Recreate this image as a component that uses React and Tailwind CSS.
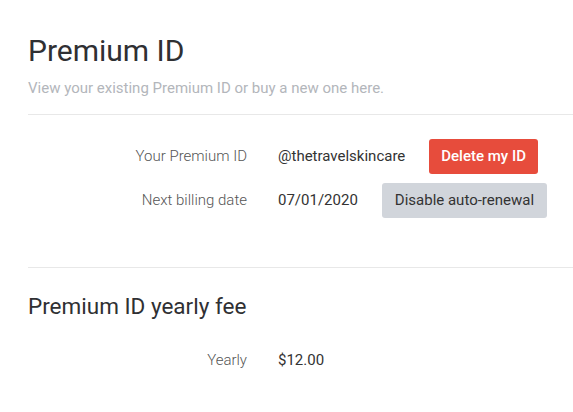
export default function App() {
  return (
    <div className="min-h-screen bg-white pl-7 pt-[33px] text-[#333]" style={{ fontFamily: 'Roboto, "Liberation Sans", sans-serif' }}>
      <h1 className="text-[30px] leading-9 font-normal text-[#2f3033]">Premium ID</h1>
      <p className="mt-[9px] text-[15px] leading-5 text-[#b3b6bb]">
        View your existing Premium ID or buy a new one here.
      </p>
      <div className="mt-4 h-px bg-[#e8e8e8]" />

      <div className="mt-6 flex flex-col gap-[9px]">
        <div className="flex items-center">
          <span className="w-[219px] text-right text-[15px] font-light text-[#555]">Your Premium ID</span>
          <span className="ml-[31px] text-[15px] text-[#333]">@thetravelskincare</span>
          <button className="ml-6 h-[35px] rounded-[3px] bg-[#e74c3c] px-3 text-[15px] font-medium text-white">
            Delete my ID
          </button>
        </div>
        <div className="flex items-center">
          <span className="w-[219px] text-right text-[15px] font-light text-[#555]">Next billing date</span>
          <span className="ml-[31px] text-[15px] text-[#333]">07/01/2020</span>
          <button className="ml-6 h-[35px] rounded-[3px] bg-[#d1d5db] px-[13px] text-[15px] text-[#333]">
            Disable auto-renewal
          </button>
        </div>
      </div>

      <div className="mt-[49px] h-px bg-[#e8e8e8]" />
      <h2 className="mt-6 text-[22.5px] leading-7 font-normal text-[#2f3033]">Premium ID yearly fee</h2>
      <div className="mt-[23px] flex h-[35px] items-center">
        <span className="w-[219px] text-right text-[15px] font-light text-[#555]">Yearly</span>
        <span className="ml-[31px] text-[15px] text-[#333]">$12.00</span>
      </div>
    </div>
  )
}
